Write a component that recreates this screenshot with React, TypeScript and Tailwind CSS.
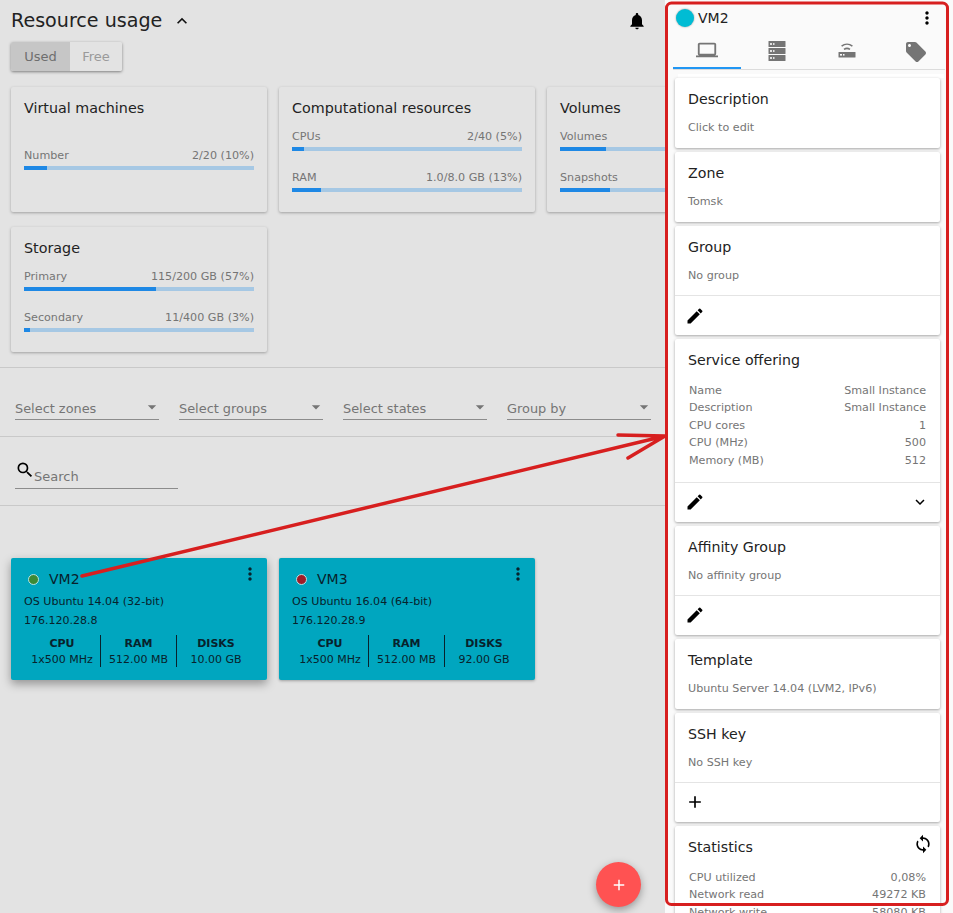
import React from "react";
import {
  MdKeyboardArrowUp, MdKeyboardArrowDown, MdNotifications, MdMoreVert, MdLaptop, MdLocalOffer,
  MdEdit, MdAdd, MdAutorenew, MdArrowDropDown, MdSearch,
} from "react-icons/md";

const font = "font-['DejaVu_Sans',sans-serif]";

function Bar({ label, value, pct }: { label: string; value?: string; pct: number }) {
  return (
    <div>
      <div className="flex justify-between text-[11.15px] leading-[14px] text-[#757575]">
        <span>{label}</span>
        {value && <span className="whitespace-nowrap">{value}</span>}
      </div>
      <div className="mt-[3px] h-1 bg-[#a6c8e4]">
        <div className="h-full bg-[#1e88e5]" style={{ width: `${pct}%` }} />
      </div>
    </div>
  );
}

function UsageCard({ title, children }: { title: string; children: React.ReactNode }) {
  return (
    <div className="h-[125px] w-[256px] shrink-0 rounded-[2px] bg-[#e3e3e3] px-[13px] pt-[12px] shadow-[0_1px_3px_rgba(0,0,0,0.3)]">
      <div className="text-[14.3px] leading-[18px] text-[#222]">{title}</div>
      {children}
    </div>
  );
}

function Select({ label }: { label: string }) {
  return (
    <div className="flex h-[24px] w-[144px] items-center justify-between border-b border-[#8c8c8c] pt-[2px] text-[12.9px] text-[#757575]">
      <span>{label}</span>
      <MdArrowDropDown className="mr-[-3px] mt-[-3px] text-[20px] text-[#757575]" />
    </div>
  );
}

function VmCard({ name, os, ip, disks, dot, shadow }: { name: string; os: string; ip: string; disks: string; dot: string; shadow?: boolean }) {
  return (
    <div className={`h-[122px] w-[256px] rounded-[2px] bg-[#00a6bf] px-[13px] text-[#08222c] ${shadow ? "shadow-[0_4px_10px_rgba(0,0,0,0.35)]" : "shadow-[0_1px_3px_rgba(0,0,0,0.3)]"}`}>
      <div className="flex h-[37px] items-center pt-[5px]">
        <span className={`ml-[4px] h-[11px] w-[11px] rounded-full border border-[#b9e2e4] ${dot}`} />
        <span className="ml-[10px] text-[14px]">{name}</span>
        <MdMoreVert className="ml-auto mr-[-6px] mt-[-10px] text-[20px] text-[#08222c]" />
      </div>
      <div className="text-[11.1px] leading-[14px]">{os}</div>
      <div className="mt-[5px] text-[11px] leading-[14px]">{ip}</div>
      <div className="mt-[7px] grid grid-cols-[77px_76px_77px] text-center text-[11px] leading-[16px]">
        <div className="h-[32px] border-r border-[#08222c] pt-px"><div className="font-bold">CPU</div><div>1x500 MHz</div></div>
        <div className="h-[32px] border-r border-[#08222c] pt-px"><div className="font-bold">RAM</div><div>512.00 MB</div></div>
        <div className="h-[32px] pl-px pt-px"><div className="font-bold">DISKS</div><div>{disks}</div></div>
      </div>
    </div>
  );
}

function SideCard({ title, text, action, right, children }: { title: string; text?: string; action?: React.ReactNode; right?: React.ReactNode; children?: React.ReactNode }) {
  return (
    <div className="mb-[4px] rounded-[2px] bg-white shadow-[0_1px_3px_rgba(0,0,0,0.35)]">
      <div className="px-[13px] pt-[12px] pb-[13px]">
        <div className="flex items-start justify-between">
          <div className="text-[14.2px] leading-[18px] text-[#222]">{title}</div>
          {right}
        </div>
        {text && <div className="mt-[13px] text-[11.15px] leading-[14px] text-[#757575]">{text}</div>}
        {children}
      </div>
      {action && <div className="mt-[-1px] flex h-[40px] items-center justify-between border-t border-[#e4e4e4] px-[10px] text-[20px] text-black">{action}</div>}
    </div>
  );
}

function Rows({ rows }: { rows: [string, string][] }) {
  return (
    <div className="mb-[0.8px] mt-[12.7px] text-[11.15px] leading-[17.5px] text-[#757575]">
      {rows.map(([a, b]) => (
        <div key={a} className="flex justify-between px-px"><span>{a}</span><span>{b}</span></div>
      ))}
    </div>
  );
}

export default function App() {
  return (
    <div className={`relative flex h-[913px] w-[953px] overflow-hidden bg-[#e3e3e3] ${font}`}>
      <main className="w-[665px] shrink-0 overflow-hidden">
        <div className="flex h-[42px] items-center pl-[11px] pr-[18px]">
          <span className="text-[19.1px] text-[#222]">Resource usage</span>
          <MdKeyboardArrowUp className="ml-[10px] text-[20px] text-[#111]" />
          <MdNotifications className="ml-auto text-[20px] text-black" />
        </div>
        <div className="ml-[11px] flex h-[29px] w-[111px] overflow-hidden rounded-[2px] text-[13px] shadow-[0_1px_3px_rgba(0,0,0,0.45)]">
          <div className="flex w-[59px] items-center justify-center bg-[#c6c6c6] text-[#6e6e6e]">Used</div>
          <div className="flex flex-1 items-center justify-center bg-[#e3e3e3] text-[#9a9a9a]">Free</div>
        </div>
        <div className="mt-[16px] flex gap-[12px] pl-[11px]">
          <UsageCard title="Virtual machines">
            <div className="mt-[32px]"><Bar label="Number" value="2/20 (10%)" pct={10} /></div>
          </UsageCard>
          <UsageCard title="Computational resources">
            <div className="mt-[13px]"><Bar label="CPUs" value="2/40 (5%)" pct={5} /></div>
            <div className="mt-[20px]"><Bar label="RAM" value="1.0/8.0 GB (13%)" pct={12.6} /></div>
          </UsageCard>
          <UsageCard title="Volumes">
            <div className="mt-[13px]"><Bar label="Volumes" pct={20} /></div>
            <div className="mt-[20px]"><Bar label="Snapshots" pct={21.7} /></div>
          </UsageCard>
        </div>
        <div className="mt-[15px] pl-[11px]">
          <UsageCard title="Storage">
            <div className="mt-[13px]"><Bar label="Primary" value="115/200 GB (57%)" pct={57.4} /></div>
            <div className="mt-[20px]"><Bar label="Secondary" value="11/400 GB (3%)" pct={2.75} /></div>
          </UsageCard>
        </div>
        <div className="mt-[15px] h-[70px] border-y border-[#c9c9c9] pl-[15px] pt-[28px]">
          <div className="flex gap-[20px]">
            <Select label="Select zones" />
            <Select label="Select groups" />
            <Select label="Select states" />
            <Select label="Group by" />
          </div>
        </div>
        <div className="h-[69px] border-b border-[#c9c9c9] pl-[15px] pt-[24px]">
          <div className="flex h-[28px] w-[163px] border-b border-[#8c8c8c]">
            <MdSearch className="mt-[-1px] text-[20px] text-black" />
            <span className="ml-[-1px] mt-[8px] text-[13px] leading-[16px] text-[#757575]">Search</span>
          </div>
        </div>
        <div className="mt-[52px] flex gap-[12px] pl-[11px]">
          <VmCard name="VM2" os="OS Ubuntu 14.04 (32-bit)" ip="176.120.28.8" disks="10.00 GB" dot="bg-[#3c8a35]" shadow />
          <VmCard name="VM3" os="OS Ubuntu 16.04 (64-bit)" ip="176.120.28.9" disks="92.00 GB" dot="bg-[#a01c28]" />
        </div>
      </main>

      <aside className="flex-1 overflow-hidden bg-[#fafafa] px-[8px]">
        <div className="flex h-[36px] items-center pl-[3px]">
          <span className="h-[18px] w-[18px] rounded-full bg-[#00bcd4] shadow-[0_0_2px_rgba(0,0,0,0.4)]" />
          <span className="ml-[4px] text-[14px] text-[#222]">VM2</span>
          <MdMoreVert className="ml-auto mr-[8px] text-[20px] text-black" />
        </div>
        <div className="grid h-[34px] grid-cols-[repeat(4,69.5px)] border-b border-[#dcdcdc] text-[#757575]">
          <div className="flex h-[33px] w-[68px] items-start justify-center border-b-2 border-[#2196f3] pt-[3px]"><MdLaptop className="text-[22px]" /></div>
          <div className="flex items-start justify-center pt-[4px]">
            <svg width="24" height="24" viewBox="0 0 24 24">
              <g fill="currentColor">
                <rect x="3.5" y="1" width="17" height="6" rx=".6" />
                <rect x="3.5" y="8" width="17" height="6" rx=".6" />
                <rect x="3.5" y="15" width="17" height="6" rx=".6" />
              </g>
              <g fill="#fafafa">
                <rect x="5" y="3.2" width="2" height="1.6" /><rect x="8" y="3.2" width="1.5" height="1.6" />
                <rect x="5" y="10.2" width="2" height="1.6" /><rect x="8" y="10.2" width="1.5" height="1.6" />
                <rect x="5" y="17.2" width="2" height="1.6" /><rect x="8" y="17.2" width="1.5" height="1.6" />
              </g>
            </svg>
          </div>
          <div className="flex items-start justify-center pt-[4px]">
            <svg width="24" height="24" viewBox="0 0 24 24" fill="none">
              <rect x="3.5" y="12" width="17" height="5.5" rx=".5" fill="currentColor" />
              <rect x="5" y="14" width="2" height="1.6" fill="#fafafa" />
              <rect x="8" y="14" width="1.5" height="1.6" fill="#fafafa" />
              <path d="M6.6 6.2c3.2-2.6 7.6-2.6 10.8 0M9 9.4c1.9-1.3 4.1-1.3 6 0" stroke="currentColor" strokeWidth="1.5" />
            </svg>
          </div>
          <div className="flex items-start justify-center pt-[4px]"><MdLocalOffer className="text-[24px]" /></div>
        </div>
        <div className="ml-[2px] mr-[5px] pt-[4px]">
          <div className="ml-[3px] mr-[-4px] h-[4px] bg-white" />
          <SideCard title="Description" text="Click to edit" />
          <SideCard title="Zone" text="Tomsk" />
          <SideCard title="Group" text="No group" action={<MdEdit />} />
          <SideCard title="Service offering" action={<><MdEdit /><MdKeyboardArrowDown className="mr-[1px] text-[18px]" /></>}>
            <Rows rows={[["Name", "Small Instance"], ["Description", "Small Instance"], ["CPU cores", "1"], ["CPU (MHz)", "500"], ["Memory (MB)", "512"]]} />
          </SideCard>
          <SideCard title="Affinity Group" text="No affinity group" action={<MdEdit />} />
          <SideCard title="Template" text="Ubuntu Server 14.04 (LVM2, IPv6)" />
          <SideCard title="SSH key" text="No SSH key" action={<MdAdd />} />
          <SideCard title="Statistics" right={<MdAutorenew className="mr-[-6px] mt-[-4px] -scale-x-100 text-[20px] text-black" />}>
            <Rows rows={[["CPU utilized", "0,08%"], ["Network read", "49272 KB"], ["Network write", "58080 KB"]]} />
          </SideCard>
        </div>
      </aside>

      <div className="absolute left-[596px] top-[862px] flex h-[45px] w-[45px] items-center justify-center rounded-full bg-[#ff5252] text-white shadow-[0_3px_8px_rgba(0,0,0,0.35)]">
        <MdAdd className="text-[18px]" />
      </div>
      <svg className="pointer-events-none absolute left-0 top-0" width="953" height="913" fill="none" stroke="#d71f1f" strokeWidth="3">
        <rect x="666.5" y="3" width="281" height="901.5" rx="5" />
        <path d="M82 576 L665 436 M618 435 L665 436 L628 458" strokeWidth="3.5" strokeLinecap="round" strokeLinejoin="round" />
      </svg>
    </div>
  );
}
